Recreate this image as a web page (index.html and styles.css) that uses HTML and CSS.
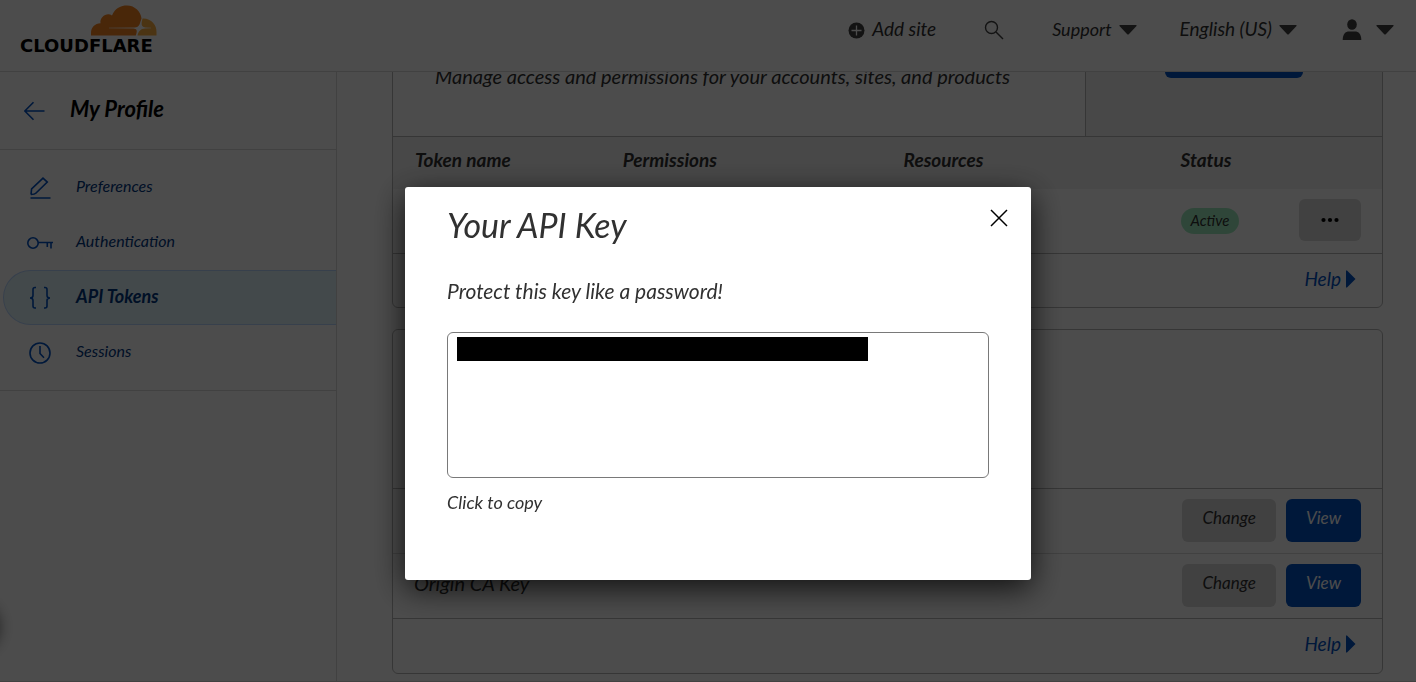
FILE: index.html
```html
<!DOCTYPE html>
<html lang="en">
<head>
<meta charset="utf-8">
<title>API Tokens</title>
<link rel="stylesheet" href="styles.css">
</head>
<body>
<div class="app">
  <header class="topbar">
    <a class="logo" href="#" aria-label="Cloudflare">
      <svg class="logo-cloud" width="66" height="31" viewBox="0 0 66 31" aria-hidden="true">
        <path fill="#f6821f" d="M0 30.500V28C0 22 4 18.500 9.500 18.200 8.500 12 16 7 21 10.500 24 3 30 .5 36 .5 44 .5 50 7 50.500 13.500L48.500 19.500C47.500 21.500 46 22.300 43.500 22.400L18 22.700V23.300L42.500 23.600C45.500 23.800 46.300 25.500 45.500 28L44.800 30.500Z"/>
        <path fill="#fbad41" d="M51.500 13.500C60 13 65.800 20 65.500 27V30.500H46.500C47.500 26 50 23.700 54 23.500L60 23.200V22.700L54.500 22.400C51.500 22.200 50.200 20.500 50.700 17.500Z"/>
      </svg>
      <span class="logo-word">CLOUDFLARE</span>
    </a>
    <nav class="topnav">
      <button class="top-item add">
        <svg width="17" height="17" viewBox="0 0 17 17" aria-hidden="true"><circle cx="8.500" cy="8.500" r="8" fill="#404040"/><path d="M8.500 3.500v10M3.500 8.500h10" stroke="#fff" stroke-width="1.300"/></svg>
        <span>Add site</span>
      </button>
      <button class="top-item search" aria-label="Search">
        <svg width="20" height="20" viewBox="0 0 20 20" fill="none" stroke="#404040" stroke-width="1.400" aria-hidden="true"><circle cx="7.500" cy="7.500" r="6"/><path d="M12 12l7 7"/></svg>
      </button>
      <button class="top-item support"><span>Support</span><svg class="caret" width="18" height="10" viewBox="0 0 18 10" aria-hidden="true"><path d="M1 0h16q1 0 .5 1L10 9q-1 1-2 0L.5 1Q0 0 1 0z"/></svg></button>
      <button class="top-item language"><span>English (US)</span><svg class="caret" width="18" height="10" viewBox="0 0 18 10" aria-hidden="true"><path d="M1 0h16q1 0 .5 1L10 9q-1 1-2 0L.5 1Q0 0 1 0z"/></svg></button>
      <button class="top-item user" aria-label="Account">
        <svg width="20" height="22" viewBox="0 0 20 22" fill="#404040" aria-hidden="true"><ellipse cx="10" cy="5.500" rx="4.800" ry="5.300"/><path d="M.7 21C.7 15 3.500 12.500 7 12.500h6c3.500 0 6.300 2.500 6.300 8.500z"/></svg>
        <svg class="caret" width="18" height="10" viewBox="0 0 18 10" aria-hidden="true"><path d="M1 0h16q1 0 .5 1L10 9q-1 1-2 0L.5 1Q0 0 1 0z"/></svg>
      </button>
    </nav>
  </header>

  <div class="body">
    <aside class="sidebar">
      <div class="side-head">
        <a href="#" class="back" aria-label="Back"><svg width="22" height="20" viewBox="0 0 22 20" fill="none" stroke="#0051c3" stroke-width="1.600" aria-hidden="true"><path d="M20.500 10H.8M9.500 1.200L.8 10l8.700 8.800"/></svg></a>
        <h2 class="side-title">My Profile</h2>
      </div>
      <nav class="side-nav">
        <a href="#" class="side-link"><svg width="28" height="28" viewBox="0 0 28 28" aria-hidden="true"><path d="M5 20.500l.6-5.500L17 4.200l4.300 3.900-11.500 11.200q-1 1.200-4.800 1.200M4.500 24h20"/></svg><span>Preferences</span></a>
        <a href="#" class="side-link"><svg width="28" height="28" viewBox="0 0 28 28" aria-hidden="true"><circle cx="7" cy="14" r="5.200"/><path d="M12.200 13.500H27M21.300 13.500v4.500M25 13.500v6"/></svg><span>Authentication</span></a>
        <a href="#" class="side-link active" aria-current="page"><svg width="28" height="28" viewBox="0 0 28 28" aria-hidden="true"><path d="M10 3.500H9q-2 0-2 2V11.500q0 2.500-3 2.500 3 0 3 2.500v5.500q0 2 2 2h1M18 3.500h1q2 0 2 2V11.500q0 2.500 3 2.500-3 0-3 2.500v5.500q0 2-2 2h-1"/></svg><span>API Tokens</span></a>
        <a href="#" class="side-link"><svg width="28" height="28" viewBox="0 0 28 28" aria-hidden="true"><circle cx="14" cy="14" r="10"/><path d="M14 7v7.500l4 4.200"/></svg><span>Sessions</span></a>
      </nav>
      <div class="side-bubble"></div>
    </aside>

    <main class="content">
      <section class="card tokens">
        <div class="card-top">
          <p class="card-desc">Manage access and permissions for your accounts, sites, and products</p>
          <div class="card-action"><button class="btn primary create" aria-label="Create"></button></div>
        </div>
        <table class="token-table">
          <thead><tr><th class="c-name">Token name</th><th class="c-perm">Permissions</th><th class="c-res">Resources</th><th class="c-status">Status</th><th class="c-menu"></th></tr></thead>
          <tbody><tr><td></td><td></td><td></td><td><span class="badge">Active</span></td><td class="menu-cell"><button class="btn more" aria-label="More"><svg width="18" height="6" viewBox="0 0 18 6" aria-hidden="true"><circle cx="2.500" cy="3" r="2.100"/><circle cx="9" cy="3" r="2.100"/><circle cx="15.500" cy="3" r="2.100"/></svg></button></td></tr></tbody>
        </table>
        <div class="card-foot"><a href="#" class="help">Help<svg width="10" height="18" viewBox="0 0 10 18" aria-hidden="true"><path d="M0 .5h1l8.500 8.500L1 17.500H0z"/></svg></a></div>
      </section>

      <section class="card keys">
        <div class="keys-head"></div>
        <div class="key-row"><span class="key-name"></span><button class="btn">Change</button><button class="btn primary">View</button></div>
        <div class="key-row"><span class="key-name">Origin CA Key</span><button class="btn">Change</button><button class="btn primary">View</button></div>
        <div class="card-foot"><a href="#" class="help">Help<svg width="10" height="18" viewBox="0 0 10 18" aria-hidden="true"><path d="M0 .5h1l8.500 8.500L1 17.500H0z"/></svg></a></div>
      </section>
    </main>
  </div>
</div>

<div class="overlay">
  <div class="modal" role="dialog" aria-modal="true" aria-labelledby="modal-title">
    <div class="modal-head">
      <h1 class="modal-title" id="modal-title">Your API Key</h1>
      <button class="close" aria-label="Close"><svg width="18" height="18" viewBox="0 0 18 18" fill="none" stroke="#000" stroke-width="1.500" aria-hidden="true"><path d="M1 1l16 16M17 1L1 17"/></svg></button>
    </div>
    <label class="modal-text" for="key">Protect this key like a password!</label>
    <div class="key-box">
      <textarea class="key-field" id="key" readonly></textarea>
      <div class="key-mask"></div>
    </div>
    <p class="copy">Click to copy</p>
  </div>
</div>
</body>
</html>
```
FILE: styles.css
```css
* { box-sizing: border-box; }

body {
  margin: 0;
  font: italic 17px/24px Lato, "Open Sans", sans-serif;
  color: #313131;
  background: #fff;
}

button { font: inherit; color: inherit; border: 0; background: none; padding: 0; }
a { text-decoration: none; color: inherit; }
h1, h2, p { margin: 0; }
svg { display: block; flex: none; }

.app { height: 100vh; display: flex; flex-direction: column; overflow: hidden; border-bottom: 1px solid #d9d9d9; }

.topbar {
  display: flex;
  flex: none;
  height: 72px;
  justify-content: space-between;
  padding: 5px 22px 0 20px;
  border-bottom: 1px solid #d9d9d9;
}
.logo { display: flex; flex-direction: column; color: #000; }
.logo-cloud { margin-left: 71px; }
.logo-word { font: bold 18px/20px "DejaVu Sans", sans-serif; }

.topnav { display: flex; align-items: center; height: 50px; font-size: 18px; }
.top-item { display: flex; align-items: center; gap: 7px; }
.top-item span { padding-bottom: 2px; }
.caret { fill: #404040; }
.add { font-size: 19px; }
.search { margin-left: 48px; }
.support { margin-left: 48px; }
.language { margin-left: 43px; font-size: 19px; }
.user { margin-left: 45px; gap: 14px; }

.body { flex: 1; display: flex; min-height: 0; }
.sidebar { flex: none; width: 337px; border-right: 1px solid #d9d9d9; }
.side-head { display: flex; align-items: center; gap: 24px; height: 78px; padding-left: 24px; border-bottom: 1px solid #d9d9d9; }
.side-title { font-size: 22px; line-height: 24px; color: #000; padding-bottom: 4px; }
.side-nav { padding: 10px 0; border-bottom: 1px solid #d9d9d9; font-size: 16px; }
.side-link {
  display: flex;
  align-items: center;
  gap: 22px;
  height: 55px;
  margin-left: 3px;
  padding-left: 22px;
  border: 1px solid transparent;
  border-right: 0;
  border-radius: 28px 0 0 28px;
  color: #003681;
}
.side-link svg { fill: none; stroke: #0051c3; stroke-width: 1.6; }
.side-link span { padding-bottom: 4px; }
.side-link.active { background: #e2f5fa; border-color: #b9d6ff; font-weight: bold; font-size: 18px; }
.side-bubble { position: fixed; left: -50px; bottom: 31px; width: 48px; height: 48px; border-radius: 50%; box-shadow: 0 0 16px #555; }

.content { flex: 1; min-width: 0; padding: 0 33px 0 55px; overflow: hidden; }
.card { border: 1px solid #b6b6b6; border-radius: 6px; overflow: hidden; margin-bottom: 21px; }
.tokens { margin-top: -20px; }
.card-top { display: flex; height: 84px; border-bottom: 1px solid #b6b6b6; }
.card-desc { width: 70%; padding: 11px 20px 0 42px; font-size: 20px; }
.card-action { width: 30%; padding: 0 79px; background: #f2f2f2; border-left: 1px solid #b6b6b6; }

.btn { height: 43px; padding: 0 20px 4px; border-radius: 6px; background: #d9d9d9; font-size: 17px; }
.btn.primary { background: #0051c3; color: #fff; }
.create { display: block; width: 100%; height: 25px; }

.token-table { width: 100%; table-layout: fixed; border-collapse: separate; border-spacing: 0; font-size: 19px; text-align: left; }
.token-table th { height: 52px; padding: 0 0 6px 22px; background: #f2f2f2; }
.token-table td { height: 65px; padding: 0 0 2px 22px; border-bottom: 1px solid #b6b6b6; }
.c-name { width: 21%; }
.c-perm { width: 28%; }
.c-res { width: 28%; }
.c-status { width: 12%; }
.token-table .c-res, .token-table .c-status, .token-table td:nth-child(4) { padding-left: 26px; }
.badge { display: inline-block; padding: 0 10px 2px; border-radius: 13px; background: #9fecc0; font-size: 15px; }
.token-table .menu-cell { text-align: right; padding: 0 21px 2px 0; }
.more { height: 42px; padding: 0 22px; vertical-align: middle; }

.card-foot { display: flex; align-items: center; justify-content: flex-end; height: 53px; padding: 0 26px 4px; }
.help { display: flex; align-items: center; gap: 5px; font-size: 19px; color: #0051c3; }
.help svg { fill: #0051c3; }

.keys-head { height: 159px; border-bottom: 1px solid #b6b6b6; }
.key-row { display: flex; align-items: center; gap: 10px; height: 65px; padding: 0 21px 2px; border-bottom: 1px solid #d9d9d9; }
.key-row:nth-child(3) { border-bottom: 1px solid #b6b6b6; }
.key-name { flex: 1; font-size: 20px; padding-bottom: 4px; }
.keys .card-foot { height: 54px; }

.overlay {
  position: fixed;
  inset: 0;
  display: flex;
  justify-content: center;
  align-items: flex-start;
  padding: 187px 0 0 20px;
  background: rgba(0, 0, 0, 0.7);
}
.modal { width: 626px; padding: 18px 42px 66px; border-radius: 3px; background: #fff; box-shadow: 0 8px 32px rgba(0, 0, 0, 0.8); }
.modal-head { display: flex; justify-content: space-between; margin-right: -20px; }
.modal-title { font-size: 34px; line-height: 40px; font-weight: normal; }
.close { align-self: flex-start; padding-top: 4px; margin-right: 1px; }
.modal-text { display: block; margin-top: 34px; font-size: 21px; line-height: 24px; }
.key-box { position: relative; margin-top: 29px; }
.key-field { display: block; width: 100%; height: 146px; border: 1px solid #797979; border-radius: 6px; resize: none; background: #fff; }
.key-mask { position: absolute; left: 10px; top: 5px; width: 411px; height: 24px; background: #000; }
.copy { margin-top: 12px; font-size: 18px; line-height: 24px; }
```
